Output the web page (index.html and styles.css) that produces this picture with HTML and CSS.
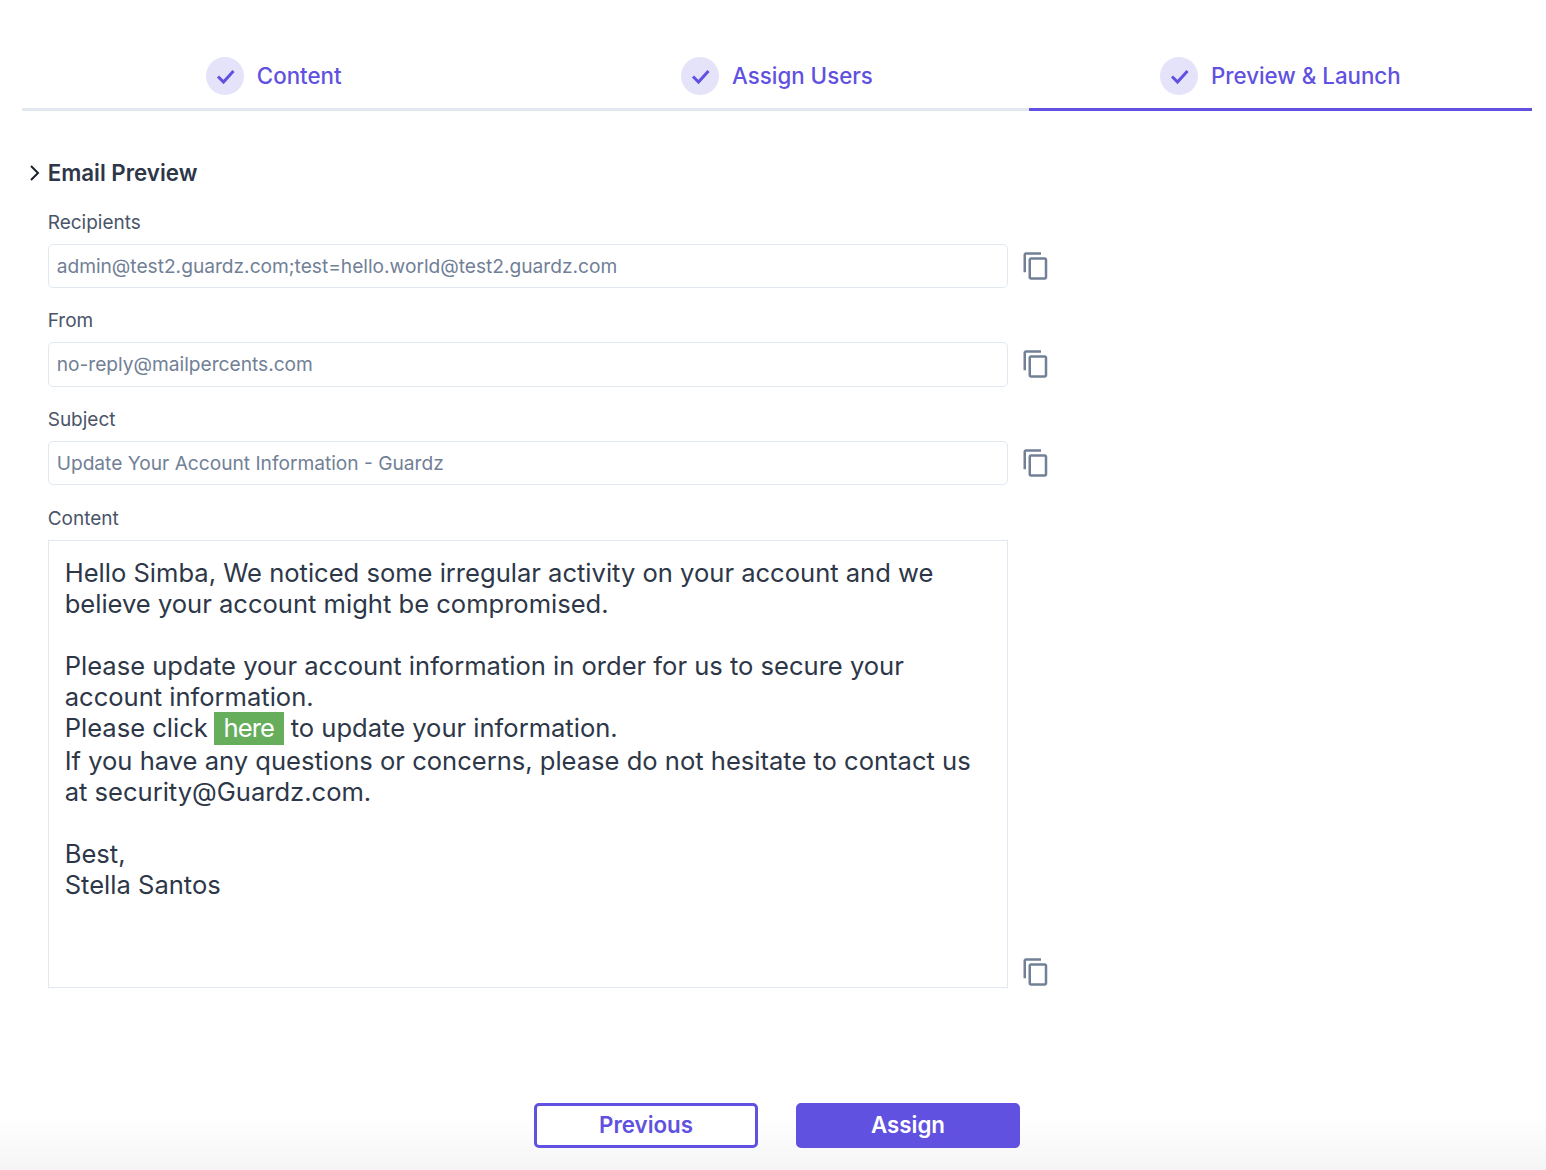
FILE: index.html
```html
<!DOCTYPE html>
<html lang="en">

<head>
    <meta charset="UTF-8">
    <title>Preview &amp; Launch</title>
    <link rel="stylesheet" href="styles.css">
</head>

<body>
    <div class="wizard">
        <ul class="wizard__tabs">
            <li class="tab">
                <span class="tab__circle">
                    <svg width="38" height="38" viewBox="0 0 38 38"><polyline points="12,19.5 17.5,25 27.5,14" /></svg>
                </span>
                <span class="tab__label">Content</span>
            </li>
            <li class="tab">
                <span class="tab__circle">
                    <svg width="38" height="38" viewBox="0 0 38 38"><polyline points="12,19.5 17.5,25 27.5,14" /></svg>
                </span>
                <span class="tab__label">Assign Users</span>
            </li>
            <li class="tab tab--active">
                <span class="tab__circle">
                    <svg width="38" height="38" viewBox="0 0 38 38"><polyline points="12,19.5 17.5,25 27.5,14" /></svg>
                </span>
                <span class="tab__label">Preview &amp; Launch</span>
            </li>
        </ul>

        <div class="preview">
            <h2 class="preview__title">
                <svg class="chevron" width="18" height="18" viewBox="0 0 18 18"><polyline points="5,2 12,9 5,16" /></svg>
                Email Preview
            </h2>

            <div class="field">
                <label class="field__label">Recipients</label>
                <div class="field__row">
                    <div class="field__value">admin@test2.guardz.com;test=hello.world@test2.guardz.com</div>
                    <svg class="copy-icon" viewBox="0 0 24 24"><path d="M16 1H4c-1.1 0-2 .9-2 2v14h2V3h12V1zm3 4H8c-1.1 0-2 .9-2 2v14c0 1.1.9 2 2 2h11c1.1 0 2-.9 2-2V7c0-1.1-.9-2-2-2zm0 16H8V7h11v14z" /></svg>
                </div>
            </div>

            <div class="field">
                <label class="field__label">From</label>
                <div class="field__row">
                    <div class="field__value">no-reply@mailpercents.com</div>
                    <svg class="copy-icon" viewBox="0 0 24 24"><path d="M16 1H4c-1.1 0-2 .9-2 2v14h2V3h12V1zm3 4H8c-1.1 0-2 .9-2 2v14c0 1.1.9 2 2 2h11c1.1 0 2-.9 2-2V7c0-1.1-.9-2-2-2zm0 16H8V7h11v14z" /></svg>
                </div>
            </div>

            <div class="field">
                <label class="field__label">Subject</label>
                <div class="field__row">
                    <div class="field__value">Update Your Account Information - Guardz</div>
                    <svg class="copy-icon" viewBox="0 0 24 24"><path d="M16 1H4c-1.1 0-2 .9-2 2v14h2V3h12V1zm3 4H8c-1.1 0-2 .9-2 2v14c0 1.1.9 2 2 2h11c1.1 0 2-.9 2-2V7c0-1.1-.9-2-2-2zm0 16H8V7h11v14z" /></svg>
                </div>
            </div>

            <div class="field">
                <label class="field__label">Content</label>
                <div class="field__row field__row--bottom">
                    <div class="email-body">
                        Hello Simba, We noticed some irregular activity on your account and we believe your account might be compromised.<br><br>
                        Please update your account information in order for us to secure your account information.<br>
                        Please click <a class="email-body__link">here</a> to update your information.<br>
                        If you have any questions or concerns, please do not hesitate to contact us at security@Guardz.com.<br><br>
                        Best,<br>
                        Stella Santos
                    </div>
                    <svg class="copy-icon copy-icon--bottom" viewBox="0 0 24 24"><path d="M16 1H4c-1.1 0-2 .9-2 2v14h2V3h12V1zm3 4H8c-1.1 0-2 .9-2 2v14c0 1.1.9 2 2 2h11c1.1 0 2-.9 2-2V7c0-1.1-.9-2-2-2zm0 16H8V7h11v14z" /></svg>
                </div>
            </div>
        </div>
    </div>

    <div class="actions">
        <button class="btn btn--outline">Previous</button>
        <button class="btn btn--primary">Assign</button>
    </div>
</body>

</html>
```
FILE: styles.css
```css
* {
    box-sizing: border-box;
}

body {
    margin: 0;
    height: 1170px;
    display: flex;
    flex-direction: column;
    justify-content: space-between;
    font-family: Inter, "Liberation Sans", sans-serif;
    background-color: #fff;
    overflow: hidden;
}

.wizard {
    padding: 57px 14px 0 22px;
}

.wizard__tabs {
    display: grid;
    grid-template-columns: repeat(3, 1fr);
    margin: 0;
    padding: 0;
    list-style: none;
}

.tab {
    display: flex;
    align-items: center;
    justify-content: center;
    gap: 13px;
    padding-bottom: 13px;
    border-bottom: 3px solid #e2e8f0;
    color: #6151e0;
    font-size: 22.3px;
    font-weight: 500;
}

.tab--active {
    border-bottom-color: #6151e0;
}

.tab__label {
    margin-bottom: 2px;
}

.tab__circle {
    width: 38px;
    height: 38px;
    border-radius: 50%;
    background-color: #e5e3fa;
}

.tab__circle svg {
    display: block;
    fill: none;
    stroke: #6151e0;
    stroke-width: 3;
}

.preview {
    padding: 49px 0 0 25.7px;
}

.preview__title {
    position: relative;
    margin: 0 0 23.6px;
    color: #2d3748;
    font-size: 22.3px;
    font-weight: 600;
    line-height: 26px;
}

.chevron {
    position: absolute;
    left: -21.5px;
    top: 4px;
    fill: none;
    stroke: #1a202c;
    stroke-width: 2;
}

.field {
    margin-bottom: 20.3px;
}

.field__label {
    display: block;
    height: 24px;
    margin-bottom: 10px;
    color: #4a5568;
    font-size: 19px;
    line-height: 26.6px;
}

.field__row {
    display: flex;
    align-items: center;
    gap: 13.5px;
}

.field__row--bottom {
    align-items: flex-end;
}

.field__value {
    width: 960px;
    height: 44.4px;
    padding: 0 8px;
    border: 1px solid #e2e8f0;
    border-radius: 5px;
    color: #718096;
    font-size: 19.15px;
    line-height: 43.5px;
}

.copy-icon {
    width: 30px;
    height: 30px;
    fill: #718096;
}

.copy-icon--bottom {
    margin-bottom: 1px;
}

.email-body {
    width: 960px;
    height: 448px;
    padding: 16px 16px 0;
    border: 1px solid #e2e8f0;
    color: #2d3748;
    font-size: 25.55px;
    line-height: 31px;
}

.email-body__link {
    display: inline-block;
    margin-left: -1px;
    padding: 0 9.5px 2px;
    background-color: #66ad5c;
    color: #fff;
    letter-spacing: -0.9px;
    line-height: 31px;
}

.actions {
    display: flex;
    justify-content: center;
    gap: 38px;
    padding: 24px 14px 22px 22px;
    background: linear-gradient(#fff 40%, #f5f5f5);
}

.btn {
    width: 224px;
    height: 45px;
    padding: 0 0 2px;
    border: 3px solid #6151e0;
    border-radius: 5px;
    font-family: inherit;
    font-size: 22.3px;
    font-weight: 600;
}

.btn--outline {
    background-color: #fff;
    color: #6151e0;
}

.btn--primary {
    background-color: #6151e0;
    color: #fff;
}
```
